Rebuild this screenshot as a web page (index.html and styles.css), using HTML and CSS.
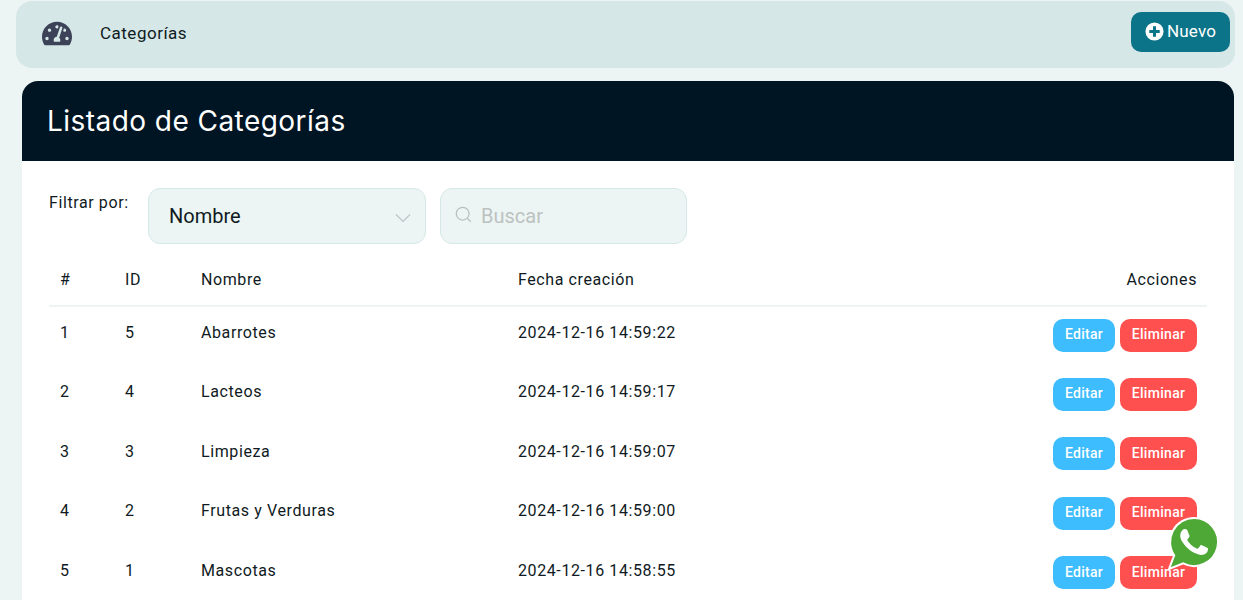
FILE: index.html
```html
<!DOCTYPE html>
<html lang="es">
<head>
<meta charset="utf-8">
<title>Categorías</title>
<link rel="stylesheet" href="styles.css">
</head>
<body>
<header class="topbar">
  <div class="topbar-left">
    <svg class="gauge" viewBox="0 0 576 512"><path fill="#3c4257" d="M288 32C128.94 32 0 160.94 0 320c0 52.8 14.25 102.26 39.06 144.8 5.61 9.62 16.3 15.2 27.44 15.2h443c11.14 0 21.83-5.58 27.44-15.2C561.75 422.26 576 372.8 576 320c0-159.06-128.94-288-288-288zm0 64c14.71 0 26.58 10.13 30.32 23.65-1.11 2.26-2.64 4.23-3.45 6.67l-9.22 27.67c-5.13 3.49-10.97 6.01-17.64 6.01-17.67 0-32-14.33-32-32S270.33 96 288 96zM96 384c-17.67 0-32-14.33-32-32s14.33-32 32-32 32 14.33 32 32-14.33 32-32 32zm48-160c-17.67 0-32-14.33-32-32s14.33-32 32-32 32 14.33 32 32-14.33 32-32 32zm246.77-72.41l-61.33 184C343.13 347.33 352 364.54 352 384c0 11.72-3.38 22.55-8.88 32H232.88c-5.5-9.45-8.88-20.28-8.88-32 0-33.94 26.5-61.43 59.9-63.59l61.34-184.01c4.17-12.56 17.73-19.45 30.36-15.17 12.57 4.19 19.35 17.79 15.17 30.36zm14.66 57.2l15.52-46.55c3.47-1.29 7.13-2.23 11.05-2.23 17.67 0 32 14.33 32 32s-14.33 32-32 32c-11.38-.01-20.89-6.28-26.57-15.22zM480 384c-17.67 0-32-14.33-32-32s14.33-32 32-32 32 14.33 32 32-14.33 32-32 32z"/></svg>
    <span class="crumb">Categorías</span>
  </div>
  <button class="btn-new">
    <svg class="plus" viewBox="0 0 20 20"><circle cx="10" cy="10" r="9.5" fill="#fff"/><path d="M10 4.5v11M4.5 10h11" stroke="#0c7488" stroke-width="3.2"/></svg>
    <span>Nuevo</span>
  </button>
</header>

<main class="card">
  <div class="card-head"><h1>Listado de Categorías</h1></div>
  <div class="card-body">
    <div class="filters">
      <label class="filter-label">Filtrar por:</label>
      <div class="select">
        <span>Nombre</span>
        <svg class="chevron" viewBox="0 0 16 10"><path d="M1 1.5l7 7 7-7" fill="none" stroke="#b9c6c5" stroke-width="1.2"/></svg>
      </div>
      <div class="search">
        <svg class="lens" viewBox="0 0 16 16"><circle cx="7.2" cy="7.2" r="6" fill="none" stroke="#b9bfbe" stroke-width="1.2"/><path d="M11.6 11.6l3.2 3.2" stroke="#b9bfbe" stroke-width="1.2"/></svg>
        <span>Buscar</span>
      </div>
    </div>
    <table class="grid">
      <colgroup>
        <col class="c-n"><col class="c-id"><col class="c-name"><col class="c-date"><col>
      </colgroup>
      <thead>
        <tr><th>#</th><th>ID</th><th>Nombre</th><th>Fecha creación</th><th class="right">Acciones</th></tr>
      </thead>
      <tbody>
        <tr><td>1</td><td>5</td><td>Abarrotes</td><td>2024-12-16 14:59:22</td><td class="right actions"><button class="btn edit">Editar</button><button class="btn del">Eliminar</button></td></tr>
        <tr><td>2</td><td>4</td><td>Lacteos</td><td>2024-12-16 14:59:17</td><td class="right actions"><button class="btn edit">Editar</button><button class="btn del">Eliminar</button></td></tr>
        <tr><td>3</td><td>3</td><td>Limpieza</td><td>2024-12-16 14:59:07</td><td class="right actions"><button class="btn edit">Editar</button><button class="btn del">Eliminar</button></td></tr>
        <tr><td>4</td><td>2</td><td>Frutas y Verduras</td><td>2024-12-16 14:59:00</td><td class="right actions"><button class="btn edit">Editar</button><button class="btn del">Eliminar</button></td></tr>
        <tr><td>5</td><td>1</td><td>Mascotas</td><td>2024-12-16 14:58:55</td><td class="right actions"><button class="btn edit">Editar</button><button class="btn del">Eliminar</button></td></tr>
      </tbody>
    </table>
  </div>
</main>

<a class="whatsapp" href="#" aria-label="WhatsApp">
  <svg viewBox="0 0 52 54">
    <path d="M26 2a24 24 0 1 1-10.8 45.4L1 53l5.2-13.6A24 24 0 0 1 26 2z" fill="#4ea836" stroke="#fff" stroke-width="2"/>
    <g transform="translate(-1.6 -1.6) scale(2.3)"><path fill="#fff" d="M17.472 14.382c-.297-.149-1.758-.867-2.03-.967-.273-.099-.471-.148-.67.15-.197.297-.767.966-.94 1.164-.173.199-.347.223-.644.075-.297-.15-1.255-.463-2.39-1.475-.883-.788-1.48-1.761-1.653-2.059-.173-.297-.018-.458.13-.606.134-.133.298-.347.446-.52.149-.174.198-.298.298-.497.099-.198.05-.371-.025-.52-.075-.149-.669-1.612-.916-2.207-.242-.579-.487-.5-.669-.51-.173-.008-.371-.01-.57-.01-.198 0-.52.074-.792.372-.272.297-1.04 1.016-1.04 2.479 0 1.462 1.065 2.875 1.213 3.074.149.198 2.096 3.2 5.077 4.487.709.306 1.262.489 1.694.625.712.227 1.36.195 1.871.118.571-.085 1.758-.719 2.006-1.413.248-.694.248-1.289.173-1.413-.074-.124-.272-.198-.57-.347z"/></g>
  </svg>
</a>
</body>
</html>
```
FILE: styles.css
```css
* { box-sizing: border-box; }
html, body { height: 100%; overflow: hidden; }
body {
  margin: 0;
  background: #edf5f4;
  color: #0f1a22;
  font-family: Roboto, "Liberation Sans", sans-serif;
  font-size: 16px;
  letter-spacing: 0.6px;
}
.topbar {
  margin: 1px 8px 0 16px;
  height: 67px;
  background: #d5e7e6;
  border-radius: 16px;
  display: flex;
  align-items: center;
  justify-content: space-between;
  padding: 0 5px 5px 26px;
}
.topbar-left { display: flex; align-items: center; gap: 28px; padding-top: 5px; }
.gauge { width: 30px; height: 27px; display: block; margin-top: -3px; }
.crumb { font-size: 17px; letter-spacing: 0.5px; margin-top: -4px; }
.btn-new {
  width: 99px;
  height: 40px;
  padding: 0 0 2px;
  background: #0c7488;
  border: 0;
  border-radius: 10px;
  color: #fff;
  font: 400 17px Roboto, sans-serif;
  letter-spacing: 0.2px;
  display: flex;
  align-items: center;
  justify-content: center;
  gap: 3px;
}
.plus { width: 19px; height: 19px; }
.card {
  margin: 13px 9px 0 22px;
  background: #fff;
  border-radius: 16px 16px 0 0;
  overflow: hidden;
}
.card-head {
  height: 80px;
  background: #001524;
  display: flex;
  align-items: center;
  padding-left: 25px;
}
.card-head h1 {
  margin: 0;
  color: #fff;
  font: 400 28px Inter, sans-serif;
  letter-spacing: 0.45px;
}
.card-body { padding: 27px 27px 0; }
.filters { display: flex; align-items: flex-start; }
.filter-label { padding-top: 5px; width: 99px; }
.select, .search {
  height: 56px;
  background: #ecf5f4;
  border: 1px solid #d5e7e6;
  border-radius: 12px;
  display: flex;
  align-items: center;
  font-size: 20px;
  letter-spacing: 0;
}
.select {
  width: 278px;
  padding: 0 14px 0 20px;
  justify-content: space-between;
  margin-right: 14px;
}
.search { width: 247px; padding-left: 14px; gap: 9px; color: #bcc2c1; }
.chevron { width: 16px; height: 10px; margin-top: 4px; }
.lens { width: 17px; height: 17px; margin-bottom: 3px; }
.grid {
  width: 1158px;
  margin-top: 9px;
  border-collapse: collapse;
  table-layout: fixed;
}
.c-n { width: 64px; }
.c-id { width: 76px; }
.c-name { width: 317px; }
.c-date { width: 400px; }
th, td { padding: 0 10px 7px 12px; text-align: left; font-weight: 400; }
th:first-child, td:first-child { padding-left: 11px; }
th { padding-bottom: 0; }
thead tr { height: 53px; border-bottom: 2px solid #edf5f4; }
tbody tr { height: 59.5px; }
.right { text-align: right; }
td.actions { padding-bottom: 2.5px; }
.btn {
  height: 33px;
  padding: 0 0 2px;
  border: 0;
  border-radius: 10px;
  color: #fff;
  font: 500 14px Roboto, sans-serif;
  letter-spacing: 0.3px;
  vertical-align: middle;
}
.edit { width: 62px; background: #3dbcfe; margin-right: 5px; }
.del { width: 77px; background: #ff5050; }
.whatsapp {
  position: fixed;
  left: 1168px;
  top: 516px;
  width: 52px;
  height: 54px;
}
.whatsapp svg { width: 100%; height: 100%; display: block; overflow: visible; }
```
